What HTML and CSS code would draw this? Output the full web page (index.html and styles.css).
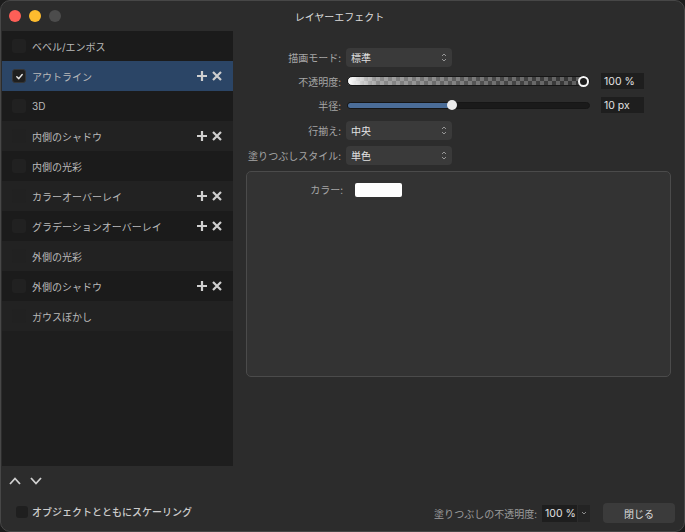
FILE: index.html
```html
<!DOCTYPE html>
<html lang="ja">
<head>
<meta charset="utf-8">
<title>レイヤーエフェクト</title>
<link rel="stylesheet" href="styles.css">
</head>
<body>
<div class="window">
  <div class="titlebar">
    <div class="lights">
      <span class="light red"></span>
      <span class="light yellow"></span>
      <span class="light gray"></span>
    </div>
    <div class="title">レイヤーエフェクト</div>
    <div></div>
  </div>
  <div class="content">
    <div class="sidebar">
      <ul class="effects">
        <li class="fx fx-dark"><span class="check"></span><span class="name">ベベル/エンボス</span></li>
        <li class="fx fx-selected"><span class="check on"><svg viewBox="0 0 10 10" width="9" height="9"><path d="M2 5.2 L4.2 7.4 L8 2.8" fill="none" stroke="#e8e8e8" stroke-width="1.6" stroke-linecap="round" stroke-linejoin="round"/></svg></span><span class="name">アウトライン</span><span class="acts"><svg class="ic" viewBox="0 0 10 10"><path d="M5 0 V10 M0 5 H10"/></svg><svg class="ic" viewBox="0 0 10 10"><path d="M1 1 L9 9 M9 1 L1 9"/></svg></span></li>
        <li class="fx fx-dark"><span class="check"></span><span class="name">3D</span></li>
        <li class="fx fx-light"><span class="check"></span><span class="name">内側のシャドウ</span><span class="acts"><svg class="ic" viewBox="0 0 10 10"><path d="M5 0 V10 M0 5 H10"/></svg><svg class="ic" viewBox="0 0 10 10"><path d="M1 1 L9 9 M9 1 L1 9"/></svg></span></li>
        <li class="fx fx-dark"><span class="check"></span><span class="name">内側の光彩</span></li>
        <li class="fx fx-light"><span class="check"></span><span class="name">カラーオーバーレイ</span><span class="acts"><svg class="ic" viewBox="0 0 10 10"><path d="M5 0 V10 M0 5 H10"/></svg><svg class="ic" viewBox="0 0 10 10"><path d="M1 1 L9 9 M9 1 L1 9"/></svg></span></li>
        <li class="fx fx-dark"><span class="check"></span><span class="name">グラデーションオーバーレイ</span><span class="acts"><svg class="ic" viewBox="0 0 10 10"><path d="M5 0 V10 M0 5 H10"/></svg><svg class="ic" viewBox="0 0 10 10"><path d="M1 1 L9 9 M9 1 L1 9"/></svg></span></li>
        <li class="fx fx-light"><span class="check"></span><span class="name">外側の光彩</span></li>
        <li class="fx fx-dark"><span class="check"></span><span class="name">外側のシャドウ</span><span class="acts"><svg class="ic" viewBox="0 0 10 10"><path d="M5 0 V10 M0 5 H10"/></svg><svg class="ic" viewBox="0 0 10 10"><path d="M1 1 L9 9 M9 1 L1 9"/></svg></span></li>
        <li class="fx fx-light"><span class="check"></span><span class="name">ガウスぼかし</span></li>
      </ul>
      <div class="reorder">
        <svg viewBox="0 0 12 8" width="12" height="8"><path d="M1 7 L6 1.5 L11 7" fill="none" stroke="#d0d0d0" stroke-width="1.8"/></svg>
        <svg viewBox="0 0 12 8" width="12" height="8"><path d="M1 1 L6 6.5 L11 1" fill="none" stroke="#d0d0d0" stroke-width="1.8"/></svg>
      </div>
    </div>
    <div class="panel">
      <div class="row r-popup first">
        <span class="label">描画モード:</span>
        <span class="popup">標準<svg class="updown" viewBox="0 0 6 11"><path d="M1 4 L3 2 L5 4 M1 7 L3 9 L5 7"/></svg></span>
      </div>
      <div class="row r-slider">
        <span class="label">不透明度:</span>
        <span class="track opacity"><span class="knob ring"></span></span>
        <span class="value">100 %</span>
      </div>
      <div class="row r-slider second">
        <span class="label">半径:</span>
        <span class="track radius"><span class="fill" style="width: 43%"></span><span class="knob solid" style="left: 43%"></span></span>
        <span class="value">10 px</span>
      </div>
      <div class="row r-popup">
        <span class="label">行揃え:</span>
        <span class="popup">中央<svg class="updown" viewBox="0 0 6 11"><path d="M1 4 L3 2 L5 4 M1 7 L3 9 L5 7"/></svg></span>
      </div>
      <div class="row r-popup">
        <span class="label">塗りつぶしスタイル:</span>
        <span class="popup">単色<svg class="updown" viewBox="0 0 6 11"><path d="M1 4 L3 2 L5 4 M1 7 L3 9 L5 7"/></svg></span>
      </div>
      <div class="group">
        <div class="row r-color">
          <span class="label">カラー:</span>
          <span class="swatch"></span>
        </div>
      </div>
    </div>
  </div>
  <div class="footer">
    <div class="scale">
      <span class="check big"></span>
      <span class="scale-text">オブジェクトとともにスケーリング</span>
    </div>
    <div class="foot-right">
      <span class="foot-label">塗りつぶしの不透明度:</span>
      <span class="combo"><span class="combo-val">100 %</span><span class="combo-arrow"><svg viewBox="0 0 6 4" width="6" height="4"><path d="M1 1 L3 3 L5 1" fill="none" stroke="#999" stroke-width="0.9"/></svg></span></span>
      <span class="button">閉じる</span>
    </div>
  </div>
</div>
</body>
</html>
```
FILE: styles.css
```css
* { box-sizing: border-box; }
html, body {
  margin: 0;
  padding: 0;
  background: #1c1c1c;
}
body {
  width: 685px;
  height: 532px;
  overflow: hidden;
  font-family: "Inter", "Noto Sans CJK JP", sans-serif;
  font-size: 10px;
  color: #bdbdbd;
}
.window {
  width: 685px;
  height: 532px;
  background: #2c2c2c;
  border: 1px solid #474747;
  border-radius: 10px;
  overflow: hidden;
  display: flex;
  flex-direction: column;
}
.titlebar {
  height: 30px;
  flex: none;
  display: grid;
  grid-template-columns: 1fr auto 1fr;
  align-items: center;
  padding: 0 8px;
}
.lights { display: flex; gap: 8px; }
.light { width: 12px; height: 12px; border-radius: 50%; display: block; }
.red { background: #fe5f57; }
.yellow { background: #febc2e; }
.gray { background: #4c4c4c; }
.title {
  color: #dcdcdc;
  font-size: 10px;
  font-family: "Noto Sans CJK JP", sans-serif;
  margin-right: 6px;
}
.content {
  flex: 1;
  display: flex;
  min-height: 0;
}
.sidebar {
  width: 232px;
  flex: none;
  padding-left: 1px;
  display: flex;
  flex-direction: column;
}
.effects {
  list-style: none;
  margin: 0;
  padding: 0;
  height: 435px;
  background: #1e1e1e;
}
.fx {
  height: 30px;
  display: flex;
  align-items: center;
  padding-left: 10px;
  padding-right: 11px;
}
.fx-dark { background: #1b1b1b; }
.fx-light { background: #222222; }
.fx-selected { background: #2b4566; }
.check {
  width: 14px;
  height: 14px;
  border-radius: 3px;
  background: #212121;
  display: flex;
  align-items: center;
  justify-content: center;
  flex: none;
}
.check.on { background: #1f1f1f; border: 1px solid #353535; }
.name {
  margin-left: 6px;
  flex: 1;
  font-family: "Inter", "Noto Sans CJK JP", sans-serif;
  color: #bababa;
  white-space: nowrap;
}
.acts { display: flex; gap: 5px; }
.ic {
  width: 10px;
  height: 10px;
  fill: none;
  stroke: #cfcfcf;
  stroke-width: 2.2;
}
.reorder {
  flex: 1;
  display: flex;
  align-items: center;
  gap: 9px;
  padding-left: 7px;
}
.panel {
  flex: 1;
  padding: 17px 13px 0 12px;
}
.row {
  display: flex;
  align-items: center;
}
.label {
  width: 96px;
  text-align: right;
  margin-right: 5px;
  color: #a6a6a6;
  flex: none;
  font-family: "Noto Sans CJK JP", sans-serif;
  white-space: nowrap;
}
.r-popup { height: 19px; margin-bottom: 6px; }
.r-slider { height: 16px; margin-bottom: 8px; }
.first { margin-bottom: 6px; }
.popup {
  width: 106px;
  height: 19px;
  background: #3a3a3a;
  border-radius: 4px;
  display: flex;
  align-items: center;
  justify-content: space-between;
  padding: 0 5px 0 5px;
  color: #e2e2e2;
  font-family: "Noto Sans CJK JP", sans-serif;
}
.updown {
  width: 6px;
  height: 11px;
  fill: none;
  stroke: #a0a0a0;
  stroke-width: 0.9;
}
.track {
  position: relative;
  width: 243px;
  margin-left: 1px;
  border-radius: 5px;
  flex: none;
}
.track.opacity {
  height: 10px;
  border: 1px solid #161616;
  background:
    linear-gradient(to right, rgba(255,255,255,1) 0%, rgba(255,255,255,0.45) 12%, rgba(255,255,255,0.12) 60%, rgba(255,255,255,0) 100%),
    repeating-conic-gradient(#5e5e5e 0 25%, #303030 0 50%) 0 0 / 8px 8px;
}
.track.radius {
  height: 7px;
  background: #1a1a1a;
  border: 1px solid #161616;
}
.fill {
  display: block;
  height: 100%;
  background: #4b6d98;
  border-radius: 4px 0 0 4px;
}
.knob {
  position: absolute;
  top: 50%;
  border-radius: 50%;
}
.knob.ring {
  right: 0;
  width: 11px;
  height: 11px;
  margin-top: -5.5px;
  border: 2px solid #f4f4f4;
  background: #1c1c1c;
}
.knob.solid {
  width: 10px;
  height: 10px;
  margin-top: -5px;
  margin-left: -5px;
  background: #ececec;
}
.value {
  margin-left: 11px;
  width: 43px;
  height: 16px;
  background: #1e1e1e;
  color: #e0e0e0;
  display: flex;
  align-items: center;
  padding-left: 3px;
  font-size: 10.5px;
}
.second { margin-bottom: 8px; }
.group {
  height: 206px;
  margin-left: 1px;
  border: 1px solid #4b4b4b;
  border-radius: 5px;
  background: #333333;
  padding-top: 10px;
}
.r-color .label { width: 96px; margin-right: 12px; }
.swatch {
  width: 47px;
  height: 14px;
  background: #ffffff;
  border-radius: 2px;
}
.footer {
  height: 36px;
  flex: none;
  display: flex;
  align-items: center;
  justify-content: space-between;
  padding: 0 9px 0 15px;
}
.scale { display: flex; align-items: center; gap: 4px; margin-top: -3px; }
.check.big { width: 12px; height: 12px; background: #1f1f1f; border-radius: 3px; }
.scale-text {
  color: #cccccc;
  font-family: "Noto Sans CJK JP", sans-serif;
  font-weight: 500;
}
.foot-right { display: flex; align-items: center; }
.foot-label {
  color: #9c9c9c;
  margin-right: 5px;
  font-family: "Noto Sans CJK JP", sans-serif;
}
.combo { display: flex; height: 17px; margin-right: 13px; }
.combo-val {
  width: 35px;
  background: #1e1e1e;
  color: #e0e0e0;
  display: flex;
  align-items: center;
  padding-left: 3px;
  font-size: 10.5px;
}
.combo-arrow {
  width: 12px;
  background: #242424;
  margin-left: 1px;
  display: flex;
  align-items: center;
  justify-content: center;
}
.button {
  width: 72px;
  height: 20px;
  background: #3b3b3b;
  border-radius: 4px;
  display: flex;
  align-items: center;
  justify-content: center;
  color: #dedede;
  font-family: "Noto Sans CJK JP", sans-serif;
}
```
